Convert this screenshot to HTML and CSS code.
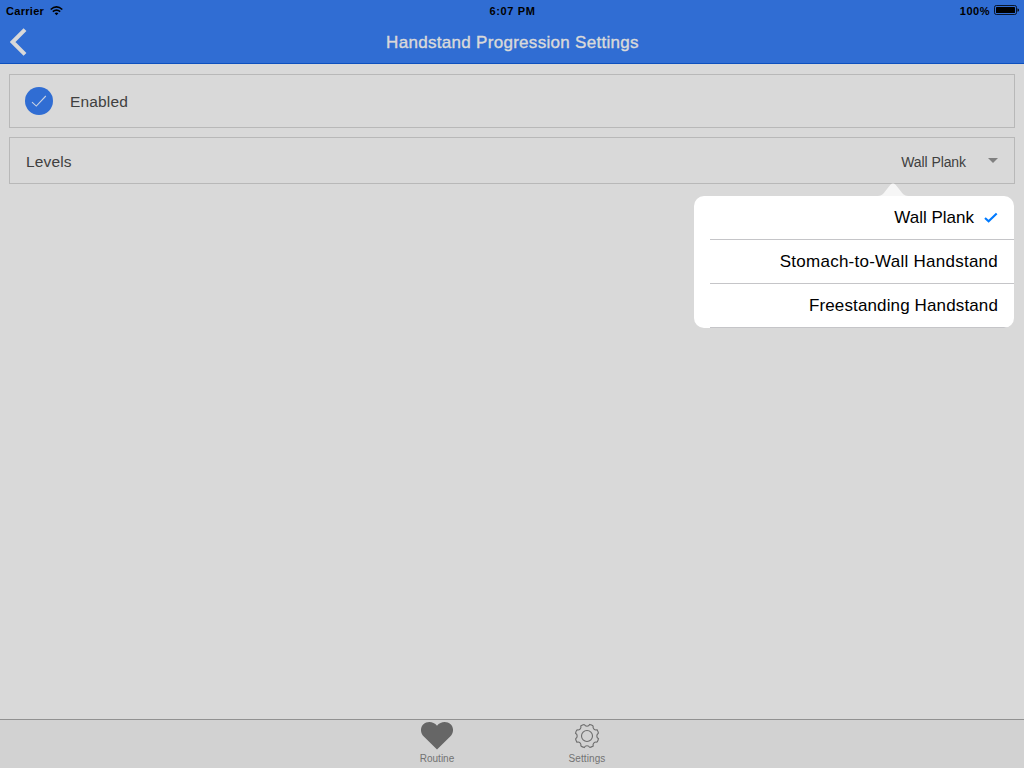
FILE: index.html
```html
<!DOCTYPE html>
<html lang="en">
<head>
<meta charset="utf-8">
<title>Handstand Progression Settings</title>
<link rel="stylesheet" href="styles.css">
</head>
<body>
<div class="app">
  <header class="top">
    <div class="status">
      <div class="status-left"><span class="carrier">Carrier</span>
        <svg class="wifi" width="13" height="10" viewBox="0 0 13 10" fill="none" stroke="#000" stroke-width="1.6"><path d="M.7 3.5Q6.5-1.6 12.3 3.5M2.8 5.7Q6.5 2.5 10.2 5.7"/><path d="M4.6 7.2Q6.5 5.6 8.4 7.2L6.5 9.2Z" fill="#000" stroke="none"/></svg>
      </div>
      <div class="clock">6:07 PM</div>
      <div class="status-right"><span class="percent">100%</span>
        <svg class="battery" width="25" height="10" viewBox="0 0 25 10"><rect x=".5" y=".5" width="22" height="9" rx="1.8" fill="none" stroke="#000" stroke-width=".8"/><rect x="2" y="2" width="19" height="6" rx=".6"/><path d="M23.5 3.2Q25 3.6 25 5T23.5 6.8Z"/></svg>
      </div>
    </div>
    <div class="nav">
      <svg class="back" width="18" height="30" viewBox="0 0 18 30"><path d="M15 2.6 2.6 15 15 27.4" fill="none" stroke="#d9d9d9" stroke-width="4"/></svg>
      <h1 class="title">Handstand Progression Settings</h1>
    </div>
  </header>
  <main class="content">
    <section class="card card-enabled">
      <svg class="toggle" width="28" height="28" viewBox="0 0 28 28"><circle cx="14" cy="14" r="14" fill="#306dd3"/><path d="M7 15.2 11.3 19.1 20.8 9" fill="none" stroke="#c9d2e2" stroke-width="1.1"/></svg>
      <span class="label enabled">Enabled</span>
    </section>
    <section class="card card-levels">
      <span class="label levels">Levels</span>
      <span class="value">Wall Plank</span>
      <svg class="caret" width="10" height="5" viewBox="0 0 10 5"><path d="M0 0H10L5 5Z" fill="#808080"/></svg>
      <div class="popover">
        <svg class="arrow" width="30" height="14" viewBox="0 0 30 14"><path d="M0 14C4 13.5 5 12 7 9.5L12.4 2.8Q15 .1 17.6 2.8L23 9.5C25 12 26 13.5 30 14Z" fill="#f6f6f6"/></svg>
        <ul class="options">
          <li class="option"><span class="opt-a">Wall Plank</span><svg class="check" width="14" height="11" viewBox="0 0 14 11"><path d="M1 6 4.6 9.3 12.7 1.4" fill="none" stroke="#007aff" stroke-width="2.1"/></svg></li>
          <li class="option"><span class="opt-b">Stomach-to-Wall Handstand</span></li>
          <li class="option"><span class="opt-c">Freestanding Handstand</span></li>
        </ul>
      </div>
    </section>
  </main>
  <nav class="tabs">
    <div class="tab">
      <svg width="32" height="28" viewBox="0 0 32 28"><path d="M16 27.5 2.8 14.6C-1 10.8-.8 5.2 2.4 2.2 6.2-1.2 12.6-.6 16 3.7 19.4-.6 25.8-1.2 29.6 2.2 32.8 5.2 33 10.8 29.2 14.6Z" fill="#666"/></svg>
      <span class="tab-label routine">Routine</span>
    </div>
    <div class="tab">
      <svg width="28" height="28" viewBox="-14 -14 28 28" fill="none" stroke="#6c6c6c" stroke-width="1.1"><circle r="5.5"/>
        <defs><path id="notch" d="M-2.7-11.5A3 3 0 0 0 2.7-11.5A11.8 11.8 0 0 1 6.22-10.04"/></defs>
        <use href="#notch"/><use href="#notch" transform="rotate(45)"/><use href="#notch" transform="rotate(90)"/><use href="#notch" transform="rotate(135)"/><use href="#notch" transform="rotate(180)"/><use href="#notch" transform="rotate(225)"/><use href="#notch" transform="rotate(270)"/><use href="#notch" transform="rotate(315)"/></svg>
      <span class="tab-label settings">Settings</span>
    </div>
  </nav>
</div>
</body>
</html>
```
FILE: styles.css
```css
* { box-sizing: border-box; }
body { margin: 0; font-family: "Liberation Sans", Arial, sans-serif; }
svg { display: block; flex: none; }
.app { width: 1024px; height: 768px; display: flex; flex-direction: column; background: #d9d9d9; overflow: hidden; }
.top { height: 64px; background: #306dd3; border-bottom: 1px solid #0d50be; }
.status { height: 20px; padding: 2px 5px 0 6px; display: grid; grid-template-columns: 1fr auto 1fr; font-size: 11px; line-height: 18px; font-weight: bold; color: #000; }
.status-left, .status-right { display: flex; align-items: flex-start; }
.status-right { justify-content: flex-end; }
.carrier { letter-spacing: 0.3px; }
.wifi { margin: 4px 0 0 6px; }
.clock { letter-spacing: 0.65px; }
.percent { letter-spacing: 0.5px; }
.battery { margin: 3px 0 0 4px; }
.nav { height: 43px; display: flex; align-items: center; padding: 0 9px 0 10px; }
.back { margin-top: 1px; }
.title { flex: 1; margin: 2px 18px 0 0; text-align: center; font-size: 17px; line-height: 20px; font-weight: normal; color: #d9d9d9; letter-spacing: 0.3px; -webkit-text-stroke: 0.4px #d9d9d9; }
.content { flex: 1; padding: 10px 9px; display: flex; flex-direction: column; gap: 9px; }
.card { position: relative; display: flex; align-items: center; border: 1px solid #b8b8b8; padding: 0 16px 0 15px; }
.card-enabled { height: 54px; }
.card-levels { height: 47px; padding-left: 16px; }
.label { font-size: 15.5px; line-height: 20px; color: #404040; letter-spacing: 0.15px; }
.enabled { margin: 2px 0 0 17px; }
.levels { margin-top: 2px; }
.value { margin: 3px 22px 0 auto; font-size: 14px; line-height: 18px; color: #404040; letter-spacing: -0.08px; }
.popover { position: absolute; top: 58px; right: 0; width: 320px; }
.arrow { position: absolute; left: 184px; top: -14px; }
.options { list-style: none; margin: 0; padding: 0 0 0 16px; height: 132px; background: #fff; border-radius: 10px; overflow: hidden; }
.option { height: 44px; border-bottom: 1px solid #c5c5c8; display: flex; align-items: center; justify-content: flex-end; padding-right: 16px; font-size: 17px; color: #000; }
.opt-b { letter-spacing: 0.25px; }
.opt-c { letter-spacing: 0.13px; }
.check { margin: 0 0 1px 10px; }
.tabs { height: 49px; border-top: 1px solid #919191; background: #d2d2d2; display: flex; justify-content: center; gap: 74px; }
.tab { width: 76px; padding-top: 2px; display: flex; flex-direction: column; align-items: center; }
.tab-label { margin-top: 3px; font-size: 10px; line-height: 12px; color: #737373; }
.settings { letter-spacing: 0.1px; }
```
